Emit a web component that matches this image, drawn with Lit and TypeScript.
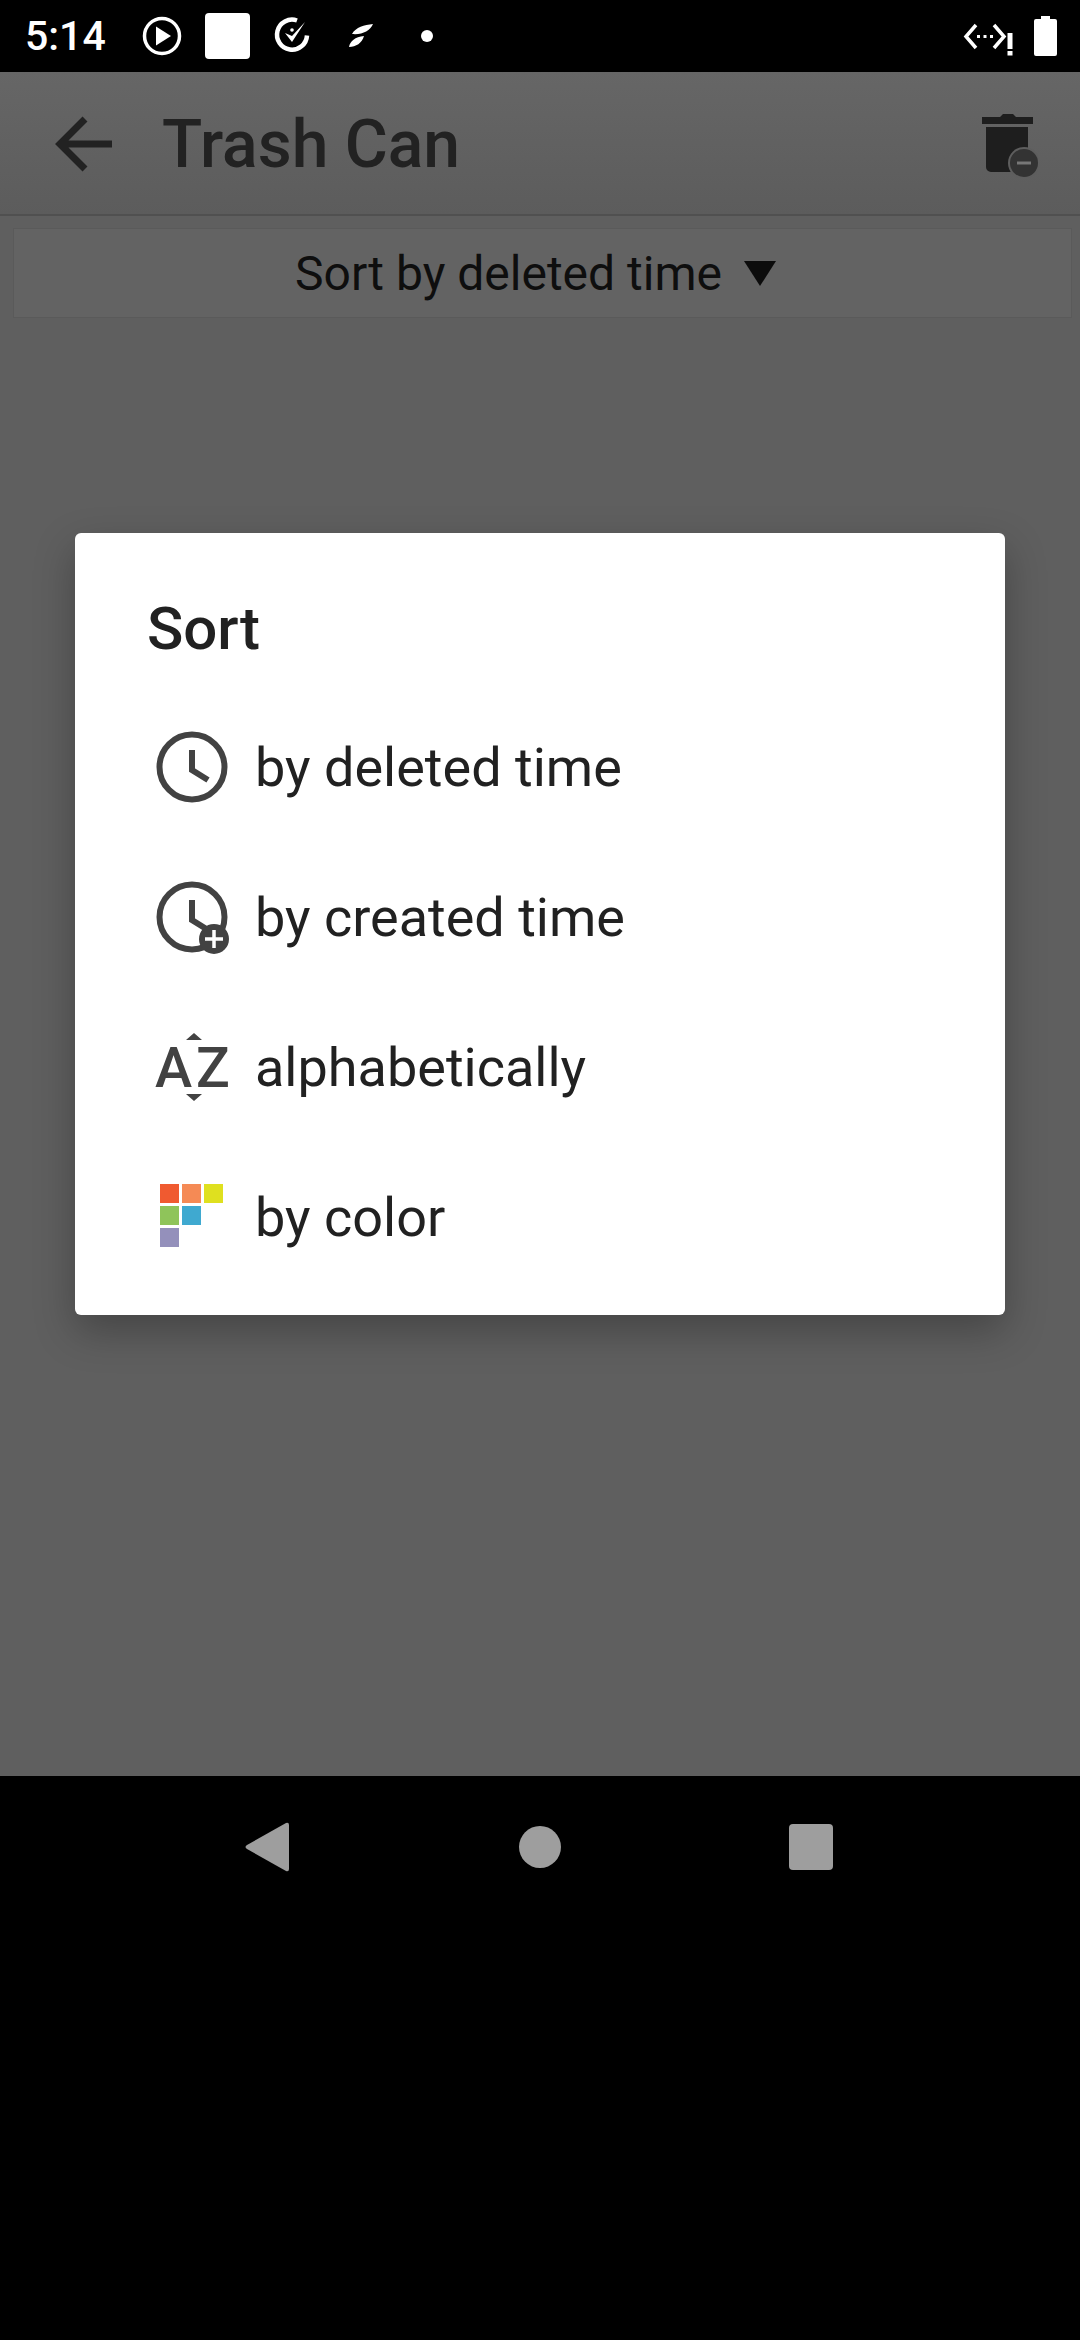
import { LitElement, html, css, svg } from 'lit';
import { customElement } from 'lit/decorators.js';

const clockHands = svg`<path d="M42 25v20l16 10" fill="none" stroke="#424242" stroke-width="6"/>`;

const sortOptions = [
    {
        label: 'by deleted time',
        icon: svg`<circle cx="42" cy="42" r="32.5" fill="none" stroke="#424242" stroke-width="6"/>${clockHands}`,
    },
    {
        label: 'by created time',
        icon: svg`<circle cx="42" cy="42" r="32.5" fill="none" stroke="#424242" stroke-width="6"/>${clockHands}
            <circle cx="64" cy="64" r="15" fill="#424242"/>
            <path d="M64 55v18M55 64h18" stroke="#fff" stroke-width="3.5"/>`,
    },
    {
        label: 'alphabetically',
        icon: svg`<text x="5" y="62" class="az" textLength="38">A</text>
            <text x="46" y="62" class="az" textLength="32">Z</text>
            <path d="M44 8l8 7H36zM44 76l8-7H36z" fill="#424242"/>`,
    },
    {
        label: 'by color',
        icon: svg`<rect x="10" y="9" width="19" height="19" fill="#f05a30"/>
            <rect x="32" y="9" width="19" height="19" fill="#f58a55"/>
            <rect x="54" y="9" width="19" height="19" fill="#dfe01f"/>
            <rect x="10" y="31" width="19" height="19" fill="#8fc45a"/>
            <rect x="32" y="31" width="19" height="19" fill="#3fa9d0"/>
            <rect x="10" y="53" width="19" height="19" fill="#9490bb"/>`,
    },
];

@customElement('app-root')
export class AppRoot extends LitElement {
    static styles = css`
        * {
            box-sizing: border-box;
        }

        :host {
            display: flex;
            flex-direction: column;
            width: 1080px;
            height: 2340px;
            background: #000;
            font-family: Roboto, 'Noto Sans', sans-serif;
        }

        svg {
            display: block;
            flex: none;
        }

        .status {
            display: flex;
            align-items: center;
            height: 72px;
            padding: 0 23px 0 25px;
            color: #fff;
        }

        .clock {
            width: 113px;
            font-size: 41px;
            font-weight: 500;
            line-height: 72px;
        }

        .tile {
            width: 45px;
            height: 46px;
            margin: 0 17px 0 19px;
            background: #fff;
            border-radius: 4px;
        }

        .check {
            margin-left: 1px;
        }

        .leaf {
            margin-left: 34px;
        }

        .dot {
            margin-left: 44px;
        }

        .battery {
            margin-left: 21px;
        }

        .spacer {
            flex: 1;
        }

        main {
            position: relative;
            height: 1704px;
            background: #5f5f5f;
        }

        .toolbar {
            display: flex;
            align-items: center;
            height: 144px;
            padding: 2px 42px 0 54px;
            background: linear-gradient(#666666, #5c5c5c);
            border-bottom: 2px solid #505050;
        }

        h1 {
            flex: 1;
            margin: 0 0 0 48px;
            color: #222;
            font-size: 66px;
            font-weight: 500;
        }

        .sorter {
            display: flex;
            align-items: center;
            justify-content: center;
            gap: 22px;
            height: 90px;
            margin: 12px 8px 0 13px;
            padding-right: 14px;
            background: #636363;
            border: 1px solid #5a5a5a;
            color: #0e0e0e;
            font-size: 48px;
        }

        .scrim {
            position: absolute;
            inset: 0;
            display: flex;
            align-items: center;
            justify-content: center;
        }

        .dialog {
            width: 930px;
            height: 782px;
            padding: 60px 0 0 72px;
            background: #fff;
            border-radius: 6px;
            box-shadow: 0 16px 40px rgba(0, 0, 0, 0.28);
            color: #212121;
        }

        h2 {
            height: 72px;
            margin: 0 0 27px;
            font-size: 60px;
            font-weight: 500;
            line-height: 72px;
        }

        .option {
            display: flex;
            align-items: center;
            gap: 21px;
            height: 150px;
            padding-left: 3px;
            font-size: 54px;
        }

        .az {
            font-family: Roboto, sans-serif;
            font-size: 56px;
            font-weight: 500;
            fill: #424242;
        }

        nav {
            position: relative;
            flex: 1;
            display: flex;
            align-items: flex-start;
            justify-content: space-between;
            padding: 46px 247px 0 244px;
        }

        .nav-home {
            margin-top: 3px;
        }

        .nav-recent {
            margin-top: 2px;
        }
    `;

    render() {
        return html`
            <div class="status">
                <span class="clock">5:14</span>
                <svg width="48" height="48" viewBox="0 0 48 48">
                    <circle cx="24" cy="24" r="17.5" fill="none" stroke="#fff" stroke-width="3.5" />
                    <path d="M18 14.5l15 9.500-15 9.500z" fill="#fff" />
                </svg>
                <div class="tile"></div>
                <svg class="check" width="44" height="44" viewBox="0 0 44 44">
                    <path d="M29 6.500a15 15 0 1 0 10 15" fill="none" stroke="#fff" stroke-width="4.500" />
                    <path d="M17 19l7 9 13-20-13 14z" fill="#fff" />
                    <circle cx="24" cy="16" r="1.800" fill="#fff" />
                </svg>
                <svg class="leaf" width="30" height="30" viewBox="0 0 30 30">
                    <path d="M6 13C10 6 18 4 27 3c-3 7-11 11-21 10zM3 26c1-6 6-10 15-11-2 7-8 11-15 11z" fill="#fff" />
                </svg>
                <svg class="dot" width="14" height="14" viewBox="0 0 14 14">
                    <circle cx="7" cy="7" r="6" fill="#fff" />
                </svg>
                <div class="spacer"></div>
                <svg width="50" height="44" viewBox="0 0 50 44">
                    <path d="M13 11L3 22.500 13 34M31 11l10 11.500L31 34" fill="none" stroke="#fff" stroke-width="3.500" />
                    <path d="M14 22.500h3M20.500 22.500h3M27 22.500h3" stroke="#fff" stroke-width="3" />
                    <path d="M44.500 19h5v16h-5zM44.500 37h5v4.500h-5z" fill="#fff" />
                </svg>
                <svg class="battery" width="23" height="40" viewBox="0 0 23 40">
                    <path d="M7 0h9v3h5q2 0 2 2v33q0 2-2 2H2q-2 0-2-2V5q0-2 2-2h5z" fill="#fff" />
                </svg>
            </div>
            <main>
                <div class="toolbar">
                    <svg width="60" height="60" viewBox="0 0 60 60">
                        <path d="M31 5L6 30l25 25M7 30h51" fill="none" stroke="#222" stroke-width="7" />
                    </svg>
                    <h1>Trash Can</h1>
                    <svg width="56" height="68" viewBox="0 0 56 68">
                        <path d="M0 7h18l3-3h10l3 3h17v7H0zM4 17h42v40a5 5 0 0 1-5 5H9a5 5 0 0 1-5-5z" fill="#1e1e1e" />
                        <circle cx="42" cy="53" r="16" fill="#5e5e5e" />
                        <circle cx="42" cy="53" r="14" fill="#333" />
                        <path d="M35 53h14" stroke="#777" stroke-width="3" />
                    </svg>
                </div>
                <div class="sorter">
                    <span>Sort by deleted time</span>
                    <svg width="32" height="28" viewBox="0 0 32 28"><path d="M0 2h32L16 27z" fill="#0c0c0c" /></svg>
                </div>
                <div class="scrim">
                    <div class="dialog">
                        <h2>Sort</h2>
                        ${sortOptions.map(
                            (option) => html`
                                <div class="option">
                                    <svg width="84" height="84" viewBox="0 0 84 84">${option.icon}</svg>
                                    <span>${option.label}</span>
                                </div>
                            `
                        )}
                    </div>
                </div>
            </main>
            <nav>
                <svg width="46" height="50" viewBox="0 0 46 50">
                    <path d="M42 1q3-1 3 2v44q0 3-3 2L3 27q-3-2 0-4z" fill="#9e9e9e" />
                </svg>
                <svg class="nav-home" width="44" height="44" viewBox="0 0 44 44">
                    <circle cx="22" cy="22" r="21" fill="#9e9e9e" />
                </svg>
                <svg class="nav-recent" width="44" height="46" viewBox="0 0 44 46">
                    <rect width="44" height="46" rx="4" fill="#9e9e9e" />
                </svg>
            </nav>
        `;
    }
}

declare global {
    interface HTMLElementTagNameMap {
        'app-root': AppRoot;
    }
}
